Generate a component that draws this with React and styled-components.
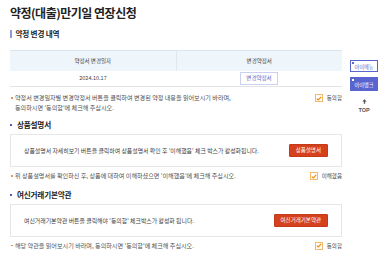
import styled, { createGlobalStyle } from "styled-components";

const Global = createGlobalStyle`
  html, body { margin: 0; padding: 0; background: #fff; }
  body { font-family: "Noto Sans CJK KR", "Noto Sans", sans-serif; color: #333; }
  * { box-sizing: border-box; }
`;

const Page = styled.div`
  display: flex;
  width: 386px;
  height: 253px;
  overflow: hidden;
`;

const Main = styled.main`
  width: 332px;
  margin-left: 10px;
  padding-top: 5px;
`;

const Title = styled.h1`
  margin: 0;
  font-size: 12px;
  line-height: 16px;
  font-weight: 700;
  color: #222;
  letter-spacing: -0.5px;
`;

const SectionTitle = styled.h2`
  display: flex;
  align-items: center;
  gap: 3px;
  margin: ${(p) => p.$mt || 8}px 0 0;
  font-size: 7.6px;
  line-height: 10px;
  font-weight: 700;
  color: #222;
  letter-spacing: -0.2px;
  &::before {
    content: "";
    display: block;
    width: ${(p) => (p.$bar ? "1.5px" : "2px")};
    height: ${(p) => (p.$bar ? "8px" : "2px")};
    background: ${(p) => (p.$bar ? "#8c9bd3" : "#4a5bc4")};
    margin-right: ${(p) => (p.$bar ? "1px" : "2px")};
  }
`;

const Table = styled.table`
  width: 100%;
  margin-top: 11px;
  border-collapse: collapse;
  border-top: 1px solid #dbe5ef;
  border-bottom: 1px solid #e3e3e3;
  font-size: 5.5px;
  color: #444;
  th {
    width: 50%;
    height: 20px;
    background: #eef5fb;
    font-weight: 400;
    border-right: 1px solid #dfe8f1;
  }
  td {
    height: 16px;
    text-align: center;
  }
  th:last-child { border-right: none; }
`;

const OutlineButton = styled.button`
  font-family: inherit;
  font-size: 5.5px;
  line-height: 11px;
  padding: 0 5px;
  background: #fff;
  color: #5c66c6;
  border: 1px solid #cdd1f0;
  cursor: pointer;
`;

const NoteRow = styled.div`
  display: flex;
  justify-content: space-between;
  align-items: flex-start;
  margin-top: ${(p) => p.$mt || 4}px;
`;

const Note = styled.p`
  margin: 0;
  position: relative;
  padding-left: 5px;
  font-size: 6.1px;
  line-height: 9.5px;
  color: #505050;
  &::before {
    content: "";
    position: absolute;
    left: 1px;
    top: 4px;
    width: 1.5px;
    height: 1.5px;
    border-radius: 50%;
    background: #f07a2a;
  }
`;

const Agree = styled.label`
  display: flex;
  align-items: center;
  gap: 4px;
  margin-top: 1px;
  font-size: 5.5px;
  color: #444;
`;

const CheckBox = styled.span`
  display: flex;
  align-items: center;
  justify-content: center;
  width: 8px;
  height: 8px;
  border: 1px solid #f6b869;
  background: #fff;
`;

const InfoBox = styled.div`
  display: flex;
  align-items: center;
  justify-content: space-between;
  height: 33px;
  margin-top: 4px;
  padding: 0 13px;
  border: 1px solid #e6e6e6;
  font-size: 5.9px;
  color: #404040;
`;

const RedButton = styled.button`
  font-family: inherit;
  font-size: 5.5px;
  line-height: 11px;
  padding: 0 6px;
  background: #d5411c;
  color: #fff;
  border: 1px solid #c23a18;
  border-radius: 1px;
  cursor: pointer;
`;

const Side = styled.aside`
  display: flex;
  flex-direction: column;
  align-items: center;
  width: 28px;
  margin-left: 8px;
  padding-top: 60px;
`;

const SideTab = styled.div`
  position: relative;
  width: 28px;
  height: ${(p) => (p.$active ? 14 : 12)}px;
  margin-bottom: ${(p) => (p.$active ? 0 : 5)}px;
  display: flex;
  align-items: center;
  justify-content: center;
  font-size: 5.2px;
  color: ${(p) => (p.$active ? "#fff" : "#5a64cf")};
  background: ${(p) => (p.$active ? "#5a64cf" : "#fff")};
  border: 1px solid #5a64cf;
  &::before {
    content: "";
    position: absolute;
    left: 1px;
    top: 1px;
    width: 1.5px;
    height: 1.5px;
    background: ${(p) => (p.$active ? "#fff" : "#5a64cf")};
  }
`;

const Top = styled.div`
  margin-top: 8px;
  display: flex;
  flex-direction: column;
  align-items: center;
  gap: 3px;
  font-family: "Liberation Sans", Arial, sans-serif;
  font-size: 5.5px;
  line-height: 6px;
  font-weight: 700;
  color: #555;
`;

const Check = () => (
  <svg width="6" height="5" viewBox="0 0 6 5">
    <path d="M0.8 2.6 L2.3 4 L5.2 0.9" fill="none" stroke="#f08a0a" strokeWidth="1.2" />
  </svg>
);

const AgreeBox = ({ label }) => (
  <Agree>
    <CheckBox>
      <Check />
    </CheckBox>
    {label}
  </Agree>
);

export default function App() {
  return (
    <Page>
      <Global />
      <Main>
        <Title>약정(대출)만기일 연장신청</Title>

        <SectionTitle $bar $mt={8}>약정 변경 내역</SectionTitle>
        <Table>
          <thead>
            <tr>
              <th>약정서 변경일자</th>
              <th>변경약정서</th>
            </tr>
          </thead>
          <tbody>
            <tr>
              <td>2024.10.17</td>
              <td>
                <OutlineButton>변경약정서</OutlineButton>
              </td>
            </tr>
          </tbody>
        </Table>
        <NoteRow $mt={6}>
          <Note>
            약정서 변경일자별 변경약정서 버튼을 클릭하여 변경된 약정 내용을 읽어보시기 바라며,
            <br />
            동의하시면 '동의함'에 체크해 주십시오.
          </Note>
          <AgreeBox label="동의함" />
        </NoteRow>

        <SectionTitle $mt={8}>상품설명서</SectionTitle>
        <InfoBox>
          <span>상품설명서 자세히보기 버튼을 클릭하여 상품설명서 확인 후 '이해했음' 체크 박스가 활성화됩니다.</span>
          <RedButton>상품설명서</RedButton>
        </InfoBox>
        <NoteRow>
          <Note>위 상품설명서를 확인하신 후, 상품에 대하여 이해하셨으면 '이해했음'에 체크해 주십시오.</Note>
          <AgreeBox label="이해했음" />
        </NoteRow>

        <SectionTitle $mt={9}>여신거래기본약관</SectionTitle>
        <InfoBox>
          <span>여신거래기본약관 버튼을 클릭해야 '동의함' 체크박스가 활성화 됩니다.</span>
          <RedButton>여신거래기본약관</RedButton>
        </InfoBox>
        <NoteRow>
          <Note>해당 약관을 읽어보시기 바라며, 동의하시면 '동의함'에 체크해 주십시오.</Note>
          <AgreeBox label="동의함" />
        </NoteRow>
      </Main>
      <Side>
        <SideTab>아이메뉴</SideTab>
        <SideTab $active>아이뱅크</SideTab>
        <Top>
          <svg width="5" height="5" viewBox="0 0 5 5">
            <path d="M2.5 0.3 L4.7 2.6 H3.2 V4.8 H1.8 V2.6 H0.3 Z" fill="#555" />
          </svg>
          TOP
        </Top>
      </Side>
    </Page>
  );
}
